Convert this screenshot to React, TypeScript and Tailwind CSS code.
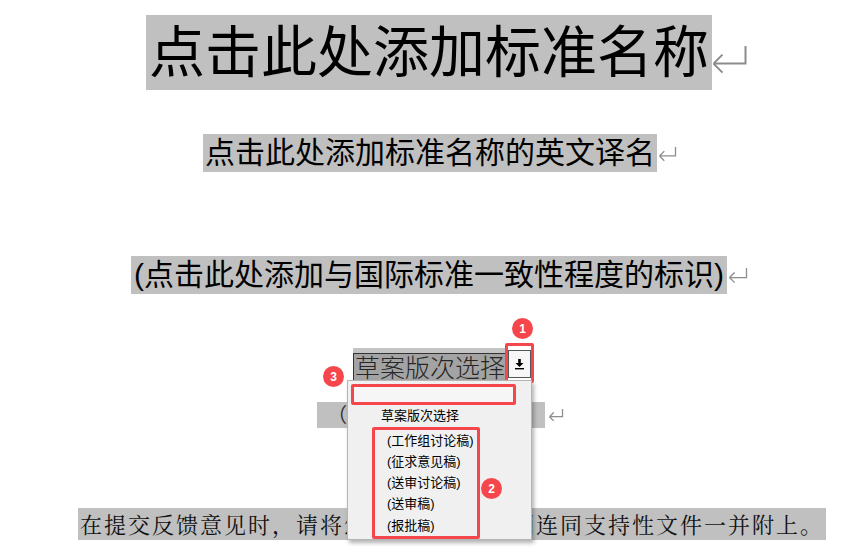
const sans = "font-['Liberation_Sans','Noto_Sans_CJK_SC',sans-serif]";

// paragraph mark (↵) as drawn by the word processor
function Mark({ w, h, className = "" }: { w: number; h: number; className?: string }) {
  const y = h * 0.62;
  const a = h * 0.3;
  return (
    <svg width={w} height={h} viewBox={`0 0 ${w} ${h}`} className={className}>
      <path
        d={`M${w - 1.5} 1 V${y} H1.5 M1.5 ${y} L${1.5 + a} ${y - a} M1.5 ${y} L${1.5 + a} ${y + a}`}
        fill="none"
        stroke="#8c8c8c"
        strokeWidth={w > 25 ? 2 : 1.3}
      />
    </svg>
  );
}

function Badge({ n }: { n: number }) {
  return (
    <span className="flex h-[21px] w-[21px] items-center justify-center rounded-full bg-[#f5474b] text-[12px] font-bold text-white">
      {n}
    </span>
  );
}

function DropIcon() {
  return (
    <svg width="11" height="12" viewBox="0 0 11 12">
      <path d="M4.2 1h2.6v4H9.5L5.5 9 1.5 5h2.7z" fill="#000" />
      <rect x="1" y="10" width="9" height="1.4" fill="#000" />
    </svg>
  );
}

const items = ["(工作组讨论稿)", "(征求意见稿)", "(送审讨论稿)", "(送审稿)", "(报批稿)"];

export default function App() {
  return (
    <div className={`relative h-[554px] w-[862px] overflow-hidden bg-white text-black ${sans}`}>
      <div className="flex flex-col">
        {/* title */}
        <div className="mt-[15px] flex items-start pl-[146px]">
          <span className="h-[75px] bg-[#c0c0c0] px-[3px] text-[56px] leading-[75px]">点击此处添加标准名称</span>
          <Mark w={35} h={30} className="mt-[30px]" />
        </div>

        {/* english name */}
        <div className="mt-[44px] flex items-start pl-[203px]">
          <span className="h-[38px] bg-[#c0c0c0] px-[2px] text-[30px] leading-[38px]">点击此处添加标准名称的英文译名</span>
          <Mark w={19} h={16} className="ml-[1px] mt-[12px]" />
        </div>

        {/* consistency */}
        <div className="mt-[84px] flex items-start pl-[131px]">
          <span className="h-[38px] bg-[#c0c0c0] px-[3px] text-[30px] leading-[38px]">(点击此处添加与国际标准一致性程度的标识)</span>
          <Mark w={20} h={17} className="ml-[1px] mt-[11px]" />
        </div>

        {/* draft select */}
        <div className="mt-[49px] flex items-end pl-[353px]">
          <div className="flex h-[35px] flex-col bg-[#c4c4c4] pt-[5px]">
            <span className="flex h-[30px] items-center border border-[#333] bg-[#a3a3a3] px-[1px] text-[25px] font-light leading-[28px] text-[#262626]">
              草案版次选择
            </span>
          </div>
          <div className="ml-[-2px] flex h-[40px] w-[29px] items-center justify-center rounded-[2px] border-[3px] border-[#f5474b] pt-[2px]">
            <span className="flex h-[28px] w-[23px] items-center justify-center border border-[#555] bg-[#f7f7f7]">
              <DropIcon />
            </span>
          </div>
        </div>

        {/* line partly hidden by the list */}
        <div className="mt-[19px] flex items-start pl-[317px]">
          <span className="h-[26px] w-[228px] bg-[#c0c0c0] pl-[10px] text-[20px] leading-[26px] text-[#333]">（本</span>
          <Mark w={16} h={14} className="ml-[3px] mt-[6px]" />
        </div>

        {/* bottom note */}
        <div className="mt-[80px] flex items-center pl-[78px]">
          <span className="h-[32px] bg-[#c0c0c0] px-[2px] font-['Noto_Serif_CJK_SC','AR_PL_UMing_CN',serif] text-[22px] leading-[32px] tracking-[2px] text-[#111]">
            在提交反馈意见时，请将您知道的相关专利连同支持性文件一并附上。
          </span>
        </div>
      </div>

      {/* dropdown list */}
      <div className="absolute left-[347px] top-[380px] h-[160px] w-[185px] border border-[#b5b5b5] bg-[#f0f0f0] shadow-[2px_3px_4px_rgba(0,0,0,0.3)]">
        <div className="ml-[3px] mt-[3px] h-[21px] w-[165px] rounded-[2px] border-[3px] border-[#f5474b] bg-[#f6f6f6]" />
        <div className="flex h-[22px] items-center pl-[33px] text-[13px] text-black">草案版次选择</div>
        <div className="ml-[24px] flex h-[112px] w-[108px] flex-col rounded-[2px] border-[3px] border-[#f5474b]">
          {items.map((t) => (
            <div key={t} className="flex h-[21.2px] items-center pl-[12px] text-[13px] text-black">
              {t}
            </div>
          ))}
        </div>
      </div>

      {/* badges */}
      <div className="absolute left-[512px] top-[318px]"><Badge n={1} /></div>
      <div className="absolute left-[323px] top-[366px]"><Badge n={3} /></div>
      <div className="absolute left-[481px] top-[478px]"><Badge n={2} /></div>
    </div>
  );
}
